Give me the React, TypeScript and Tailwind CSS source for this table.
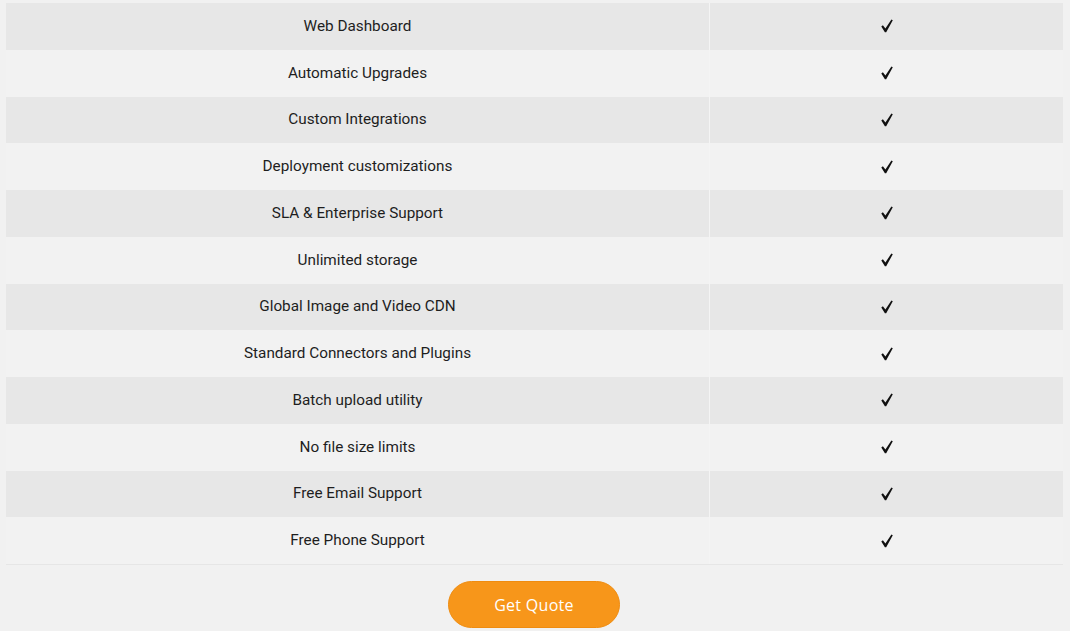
import React from "react";

const rows = [
  "Web Dashboard",
  "Automatic Upgrades",
  "Custom Integrations",
  "Deployment customizations",
  "SLA & Enterprise Support",
  "Unlimited storage",
  "Global Image and Video CDN",
  "Standard Connectors and Plugins",
  "Batch upload utility",
  "No file size limits",
  "Free Email Support",
  "Free Phone Support",
];

function Check() {
  return (
    <svg width="12" height="14" viewBox="0 0 12 14" className="block">
      <path d="M0.3 7.6 L1.9 6.3 L4.4 9.4 L10.4 0.4 L11.8 1.2 L5.2 13.2 L3.9 13.2 Z" fill="#111" />
    </svg>
  );
}

export default function App() {
  return (
    <div className="w-[1070px] h-[631px] bg-[#f1f1f1] overflow-hidden font-['Roboto',sans-serif]">
      <div className="pt-[3px] pl-[6px] pr-[7px]">
        <div className="border-b border-[#e6e6e6]">
          {rows.map((r, i) => (
            <div
              key={r}
              className={`flex h-[46.75px] ${i % 2 === 0 ? "bg-[#e7e7e7]" : "bg-[#f2f2f2]"}`}
            >
              <div className="w-[704px] flex items-center justify-center text-[15.3px] text-[#1e1e1e] border-r border-[#f4f4f4]">
                {r}
              </div>
              <div className="flex-1 flex items-center justify-center pl-[1px]">
                <Check />
              </div>
            </div>
          ))}
        </div>
      </div>
      <div className="flex justify-center pt-[16px] pr-[2px]">
        <button className="w-[172px] h-[47px] rounded-full bg-[#f7961a] border border-[#ef8c10] text-white text-[16px] tracking-[0.3px] font-['Open_Sans',sans-serif]">
          Get Quote
        </button>
      </div>
    </div>
  );
}
